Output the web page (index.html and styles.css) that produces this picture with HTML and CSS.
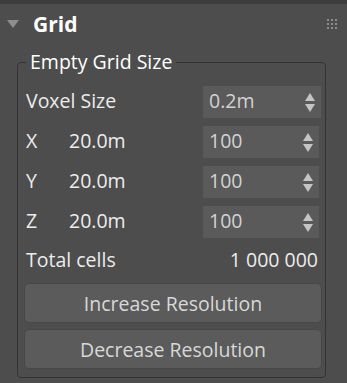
FILE: index.html
```html
<!DOCTYPE html>
<html lang="en">
<head>
    <meta charset="UTF-8">
    <title>Grid</title>
    <link rel="stylesheet" href="styles.css">
</head>
<body>
    <div class="topbar"></div>
    <div class="header">
        <span class="arrow"></span>
        <span class="title">Grid</span>
        <span class="grip">
            <i></i><i></i><i></i>
            <i></i><i></i><i></i>
            <i></i><i></i><i></i>
        </span>
    </div>
    <fieldset class="group">
        <legend>Empty Grid Size</legend>
        <div class="row">
            <span class="label">Voxel Size</span>
            <div class="spin wide"><span class="val">0.2m</span><span class="arrows"><b class="up"></b><b class="down"></b></span></div>
        </div>
        <div class="row">
            <span class="axis">X</span><span class="dim">20.0m</span>
            <div class="spin"><span class="val">100</span><span class="arrows"><b class="up"></b><b class="down"></b></span></div>
        </div>
        <div class="row">
            <span class="axis">Y</span><span class="dim">20.0m</span>
            <div class="spin"><span class="val">100</span><span class="arrows"><b class="up"></b><b class="down"></b></span></div>
        </div>
        <div class="row">
            <span class="axis">Z</span><span class="dim">20.0m</span>
            <div class="spin"><span class="val">100</span><span class="arrows"><b class="up"></b><b class="down"></b></span></div>
        </div>
        <div class="total">
            <span>Total cells</span>
            <span>1 000 000</span>
        </div>
        <button class="btn first">Increase Resolution</button>
        <button class="btn">Decrease Resolution</button>
    </fieldset>
</body>
</html>
```

FILE: styles.css
```css
*{
    margin: 0;
    padding: 0;
    box-sizing: border-box;
}
body{
    width: 347px;
    height: 383px;
    overflow: hidden;
    background: #4d4d4d;
    color: #ececec;
    font-family: "Open Sans", "Noto Sans", sans-serif;
    font-size: 19.5px;
}
.topbar{
    height: 4px;
    background: #3d3d3d;
}
.header{
    display: flex;
    align-items: center;
    height: 40px;
    margin-bottom: 6px;
    padding: 0 10px 0 7px;
}
.arrow{
    width: 0;
    height: 0;
    border-left: 6px solid transparent;
    border-right: 6px solid transparent;
    border-top: 8px solid #8e8e8e;
    margin-right: 14px;
}
.title{
    font-weight: bold;
    font-size: 21px;
    color: #fff;
    flex: 1;
}
.grip{
    display: grid;
    grid-template-columns: repeat(3, 2px);
    grid-auto-rows: 2px;
    gap: 2px;
}
.grip i{
    background: #8c8c8c;
}
.group{
    width: 309px;
    margin-left: 17px;
    border: 1px solid #333;
    border-radius: 4px;
    padding: 12px 3px 8px 8px;
}
.group legend{
    padding: 0 4px;
    line-height: 24px;
    color: #fff;
}
.row{
    display: flex;
    align-items: center;
    height: 32px;
    margin-bottom: 8px;
}
.label, .axis, .dim{
    margin-bottom: 4px;
}
.label{
    flex: 1;
}
.axis{
    width: 43px;
}
.dim{
    flex: 1;
}
.spin{
    display: flex;
    align-items: center;
    justify-content: space-between;
    width: 116px;
    height: 32px;
    margin-right: 3px;
    padding: 0 6px 0 6px;
    background: #5a5a5a;
    color: #d2d2d2;
}
.spin.wide{
    width: 118px;
    margin-right: 1px;
}
.spin .val{
    margin-bottom: 3px;
}
.arrows{
    display: flex;
    flex-direction: column;
    gap: 3px;
}
.arrows b{
    width: 0;
    height: 0;
    border-left: 5.5px solid transparent;
    border-right: 5.5px solid transparent;
}
.arrows .up{
    border-bottom: 8px solid #c4c4c4;
}
.arrows .down{
    border-top: 8px solid #c4c4c4;
}
.total{
    display: flex;
    justify-content: space-between;
    align-items: center;
    height: 30px;
    padding: 0 4px 3px 0;
    margin-bottom: 7px;
}
.btn{
    display: block;
    width: 298px;
    height: 40px;
    margin-left: -2px;
    border: 1px solid #474747;
    border-radius: 5px;
    background: #5b5b5b;
    color: #d8d8d8;
    font-family: inherit;
    font-size: 19.5px;
}
.btn.first{
    margin-bottom: 6px;
}
```
